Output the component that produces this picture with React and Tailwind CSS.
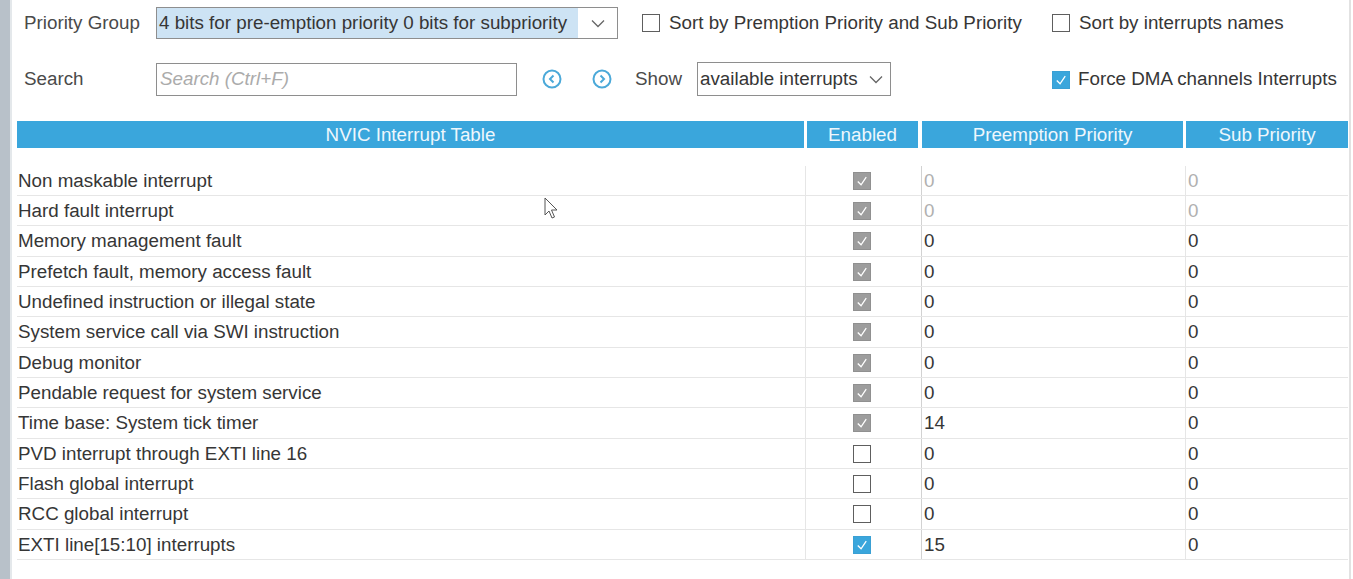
import React from "react";

const rows = [
  { name: "Non maskable interrupt", state: "gray", pre: "0", sub: "0", dim: true },
  { name: "Hard fault interrupt", state: "gray", pre: "0", sub: "0", dim: true },
  { name: "Memory management fault", state: "gray", pre: "0", sub: "0" },
  { name: "Prefetch fault, memory access fault", state: "gray", pre: "0", sub: "0" },
  { name: "Undefined instruction or illegal state", state: "gray", pre: "0", sub: "0" },
  { name: "System service call via SWI instruction", state: "gray", pre: "0", sub: "0" },
  { name: "Debug monitor", state: "gray", pre: "0", sub: "0" },
  { name: "Pendable request for system service", state: "gray", pre: "0", sub: "0" },
  { name: "Time base: System tick timer", state: "gray", pre: "14", sub: "0" },
  { name: "PVD interrupt through EXTI line 16", state: "off", pre: "0", sub: "0" },
  { name: "Flash global interrupt", state: "off", pre: "0", sub: "0" },
  { name: "RCC global interrupt", state: "off", pre: "0", sub: "0" },
  { name: "EXTI line[15:10] interrupts", state: "blue", pre: "15", sub: "0" },
];

function Check({ className }) {
  return (
    <svg viewBox="0 0 17 17" className={className}>
      <polyline points="4,9 7.5,12.5 13,4.5" fill="none" stroke="white" strokeWidth="1.4" />
    </svg>
  );
}

function Box({ state }) {
  if (state === "gray")
    return (
      <div className="w-[18px] h-[18px] bg-[#9d9d9d] border border-[#909090] flex items-center justify-center">
        <Check className="w-[16px] h-[16px]" />
      </div>
    );
  if (state === "blue")
    return (
      <div className="w-[18px] h-[18px] bg-[#3aa6dc] border border-[#3aa0d4] flex items-center justify-center">
        <Check className="w-[16px] h-[16px]" />
      </div>
    );
  return <div className="w-[18px] h-[18px] bg-white border-[1.5px] border-[#5e5e5e]" />;
}

function Chevron() {
  return (
    <svg width="14" height="9" viewBox="0 0 14 9">
      <polyline points="1,1.5 7,7.5 13,1.5" fill="none" stroke="#666" strokeWidth="1.3" />
    </svg>
  );
}

function NavIcon({ dir }) {
  return (
    <svg width="22" height="22" viewBox="0 0 22 22">
      <circle cx="11" cy="11" r="8.5" fill="none" stroke="#4ba9d9" strokeWidth="2" />
      {dir === "left" ? (
        <polyline points="12.5,7.5 9,11 12.5,14.5" fill="none" stroke="#4ba9d9" strokeWidth="2" />
      ) : (
        <polyline points="9.5,7.5 13,11 9.5,14.5" fill="none" stroke="#4ba9d9" strokeWidth="2" />
      )}
    </svg>
  );
}

export default function App() {
  return (
    <div className="relative flex h-[579px] w-[1353px] overflow-hidden bg-white font-['Liberation_Sans',Arial,sans-serif] text-[18.8px] text-[#363636]">
      <div className="w-[10px] shrink-0 bg-[#b8c1c9]" />
      <div className="w-[2px] shrink-0 bg-[#e4e8eb]" />
      <div className="flex-1 flex flex-col">
        {/* Row 1 */}
        <div className="mt-[7px] h-[32px] flex items-center pl-[12px]">
          <div className="w-[132px] text-[#4a4a4a]">Priority Group</div>
          <div className="w-[462px] h-[32px] border border-[#8e8e8e] flex">
            <div className="w-[421px] h-full bg-[#cde3f4] flex items-center pl-[2px] whitespace-nowrap overflow-hidden">
              4 bits for pre-emption priority 0 bits for subpriority
            </div>
            <div className="flex-1 flex items-center justify-center">
              <Chevron />
            </div>
          </div>
          <div className="ml-[24px]">
            <Box state="off" />
          </div>
          <div className="ml-[9px] w-[383px] whitespace-nowrap">Sort by Premption Priority and Sub Priority</div>
          <div>
            <Box state="off" />
          </div>
          <div className="ml-[9px] whitespace-nowrap">Sort by interrupts names</div>
        </div>

        {/* Row 2 */}
        <div className="mt-[23px] h-[34px] flex items-center pl-[12px]">
          <div className="w-[132px] text-[#4a4a4a] pt-[1px]">Search</div>
          <div className="w-[361px] h-[33px] border border-[#8e8e8e] flex items-center pl-[3px] italic text-[#ababab]">
            Search (Ctrl+F)
          </div>
          <div className="ml-[24px] flex">
            <NavIcon dir="left" />
          </div>
          <div className="ml-[28px] flex">
            <NavIcon dir="right" />
          </div>
          <div className="ml-[22px] w-[62px] text-[#4a4a4a] pt-[1px]">Show</div>
          <div className="w-[194px] h-[34px] border border-[#8e8e8e] flex items-center justify-between pl-[2px] pr-[7px] pt-[1px]">
            <span className="whitespace-nowrap">available interrupts</span>
            <Chevron />
          </div>
          <div className="ml-[161px] pt-[1px]">
            <Box state="blue" />
          </div>
          <div className="ml-[8px] whitespace-nowrap pt-[1px]">Force DMA channels Interrupts</div>
        </div>

        {/* Table */}
        <div className="mt-[25px] ml-[5px] w-[1331px]">
          <div className="flex h-[27px] text-[#eef7fc]">
            <div className="w-[787px] bg-[#3aa6dc] flex items-center justify-center pt-[1px]">NVIC Interrupt Table</div>
            <div className="ml-[3px] w-[111px] bg-[#3aa6dc] flex items-center justify-center pt-[1px]">Enabled</div>
            <div className="ml-[4px] w-[261px] bg-[#3aa6dc] flex items-center justify-center pt-[1px]">Preemption Priority</div>
            <div className="ml-[3px] w-[162px] bg-[#3aa6dc] flex items-center justify-center pt-[1px]">Sub Priority</div>
          </div>
          <div className="mt-[18px]">
            {rows.map((r, i) => (
              <div
                key={i}
                className={
                  "flex border-b border-[#e6e6e6] " + (i % 3 === 2 ? "h-[31px]" : "h-[30px]")
                }
              >
                <div className="w-[789px] border-r border-[#e6e6e6] flex items-center pl-[1px] pt-[1px] whitespace-nowrap">
                  {r.name}
                </div>
                <div className="w-[116px] border-r border-[#d2d2d2] flex items-center pl-[47px]">
                  <Box state={r.state} />
                </div>
                <div
                  className={
                    "w-[264px] border-r border-[#e6e6e6] flex items-center pl-[2px] pt-[1px] " +
                    (r.dim ? "text-[#b0b0b0]" : "")
                  }
                >
                  {r.pre}
                </div>
                <div className={"w-[162px] flex items-center pl-[2px] pt-[1px] " + (r.dim ? "text-[#b0b0b0]" : "")}>
                  {r.sub}
                </div>
              </div>
            ))}
          </div>
        </div>
      </div>
      <div className="w-[2px] shrink-0 bg-[#e2e2e2]" />
      <div className="w-[2px] shrink-0 bg-white" />

      {/* mouse cursor */}
      <svg className="absolute left-[544px] top-[197px]" width="16" height="24" viewBox="0 0 16 24">
        <path
          d="M1 1 L1 18 L5 14 L8 21 L10.5 20 L7.5 13 L13 13 Z"
          fill="white"
          stroke="#555"
          strokeWidth="1"
          strokeLinejoin="round"
        />
      </svg>
    </div>
  );
}
